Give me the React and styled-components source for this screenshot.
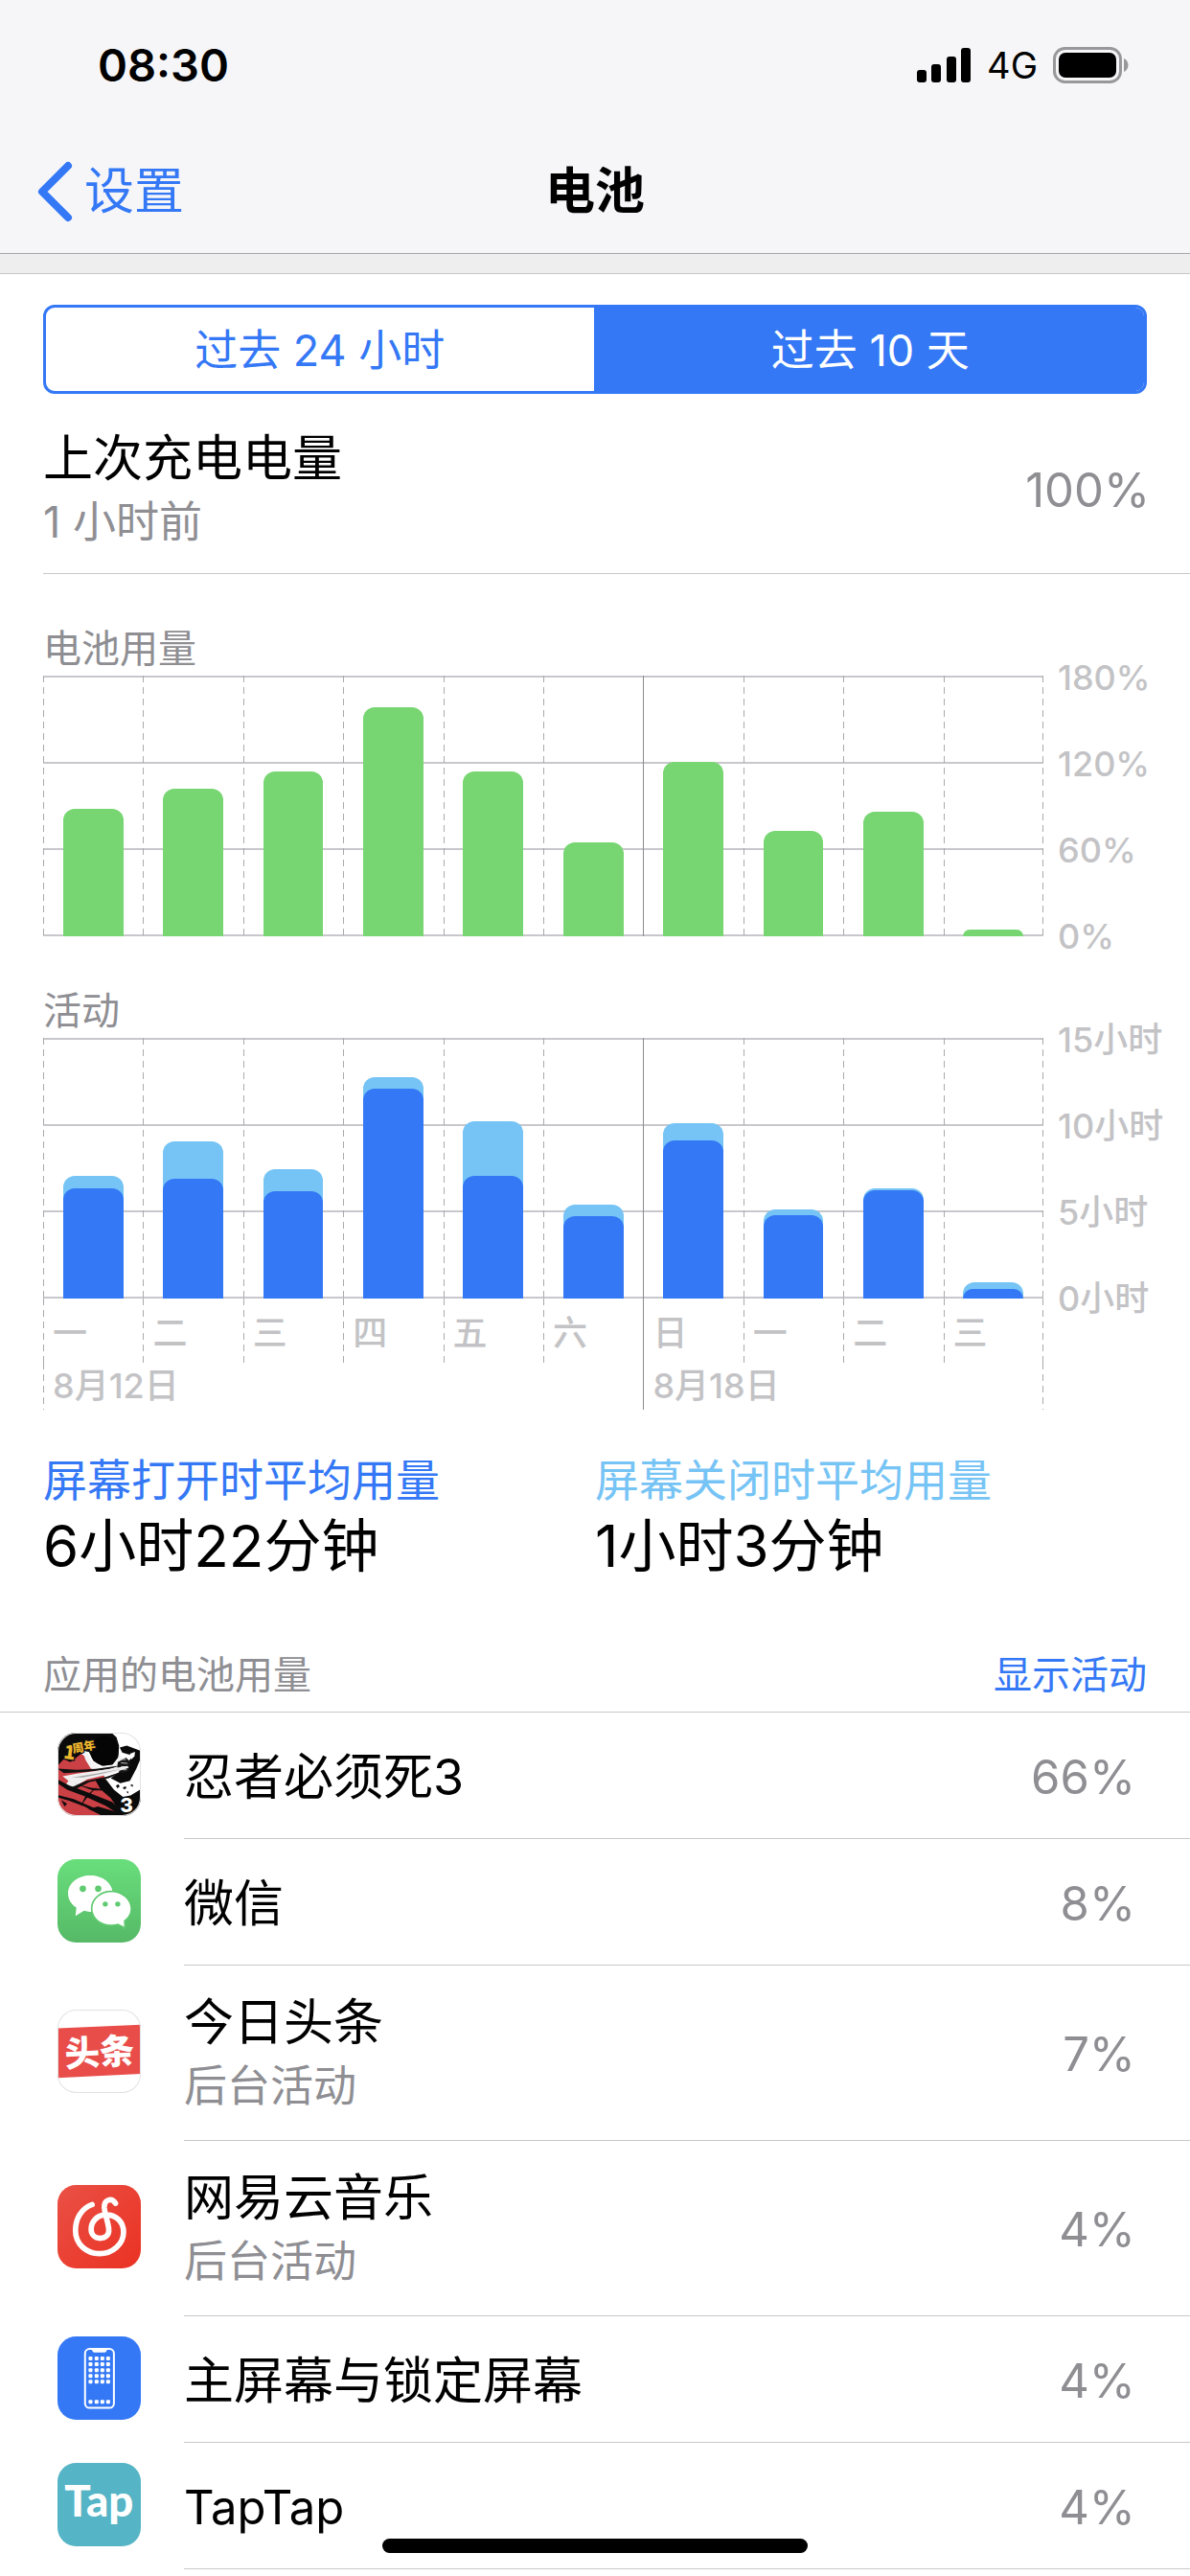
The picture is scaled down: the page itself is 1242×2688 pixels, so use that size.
import React from 'react'
import styled, { createGlobalStyle } from 'styled-components'

const BLUE = '#3478f6'
const LIGHTBLUE = '#76c4f5'
const GREEN = '#77d672'
const GRAY = '#8e8e93'
const AXISGRAY = '#c3c3c6'
const LINE = '#c8c7cc'

const GlobalStyle = createGlobalStyle`
  * { box-sizing: border-box; }
  body {
    margin: 0;
    background: #fff;
    color: #000;
    font-family: Inter, "Noto Sans CJK SC", sans-serif;
    font-size: 52px;
    line-height: 66px;
  }
  h1, h2, p, ul { margin: 0; padding: 0; font-size: inherit; font-weight: inherit; }
  button { font: inherit; border: 0; padding: 0; background: none; cursor: pointer; }
  svg { display: block; flex: none; }
`

const Header = styled.header`
  background: #f6f6f8;
  border-bottom: 1px solid #a7a7aa;
`

const StatusBar = styled.div`
  display: flex;
  align-items: center;
  justify-content: space-between;
  height: 132px;
  padding: 4px 64px 0 102px;
`

const Time = styled.span`
  font-size: 47px;
  font-weight: 600;
`

const StatusIcons = styled.div`
  display: flex;
  align-items: center;
  gap: 16px;
  font-size: 38px;
`

const NavBar = styled.nav`
  display: grid;
  grid-template-columns: 1fr auto 1fr;
  align-items: center;
  height: 132px;
  padding: 3px 38px 0;
`

const BackLink = styled.a`
  display: flex;
  align-items: center;
  gap: 11px;
  color: ${BLUE};
  text-decoration: none;
`

const Title = styled.h1`
  font-weight: 600;
`

const Spacer = styled.div`
  height: 21px;
  background: #eeeeef;
  border-bottom: 1px solid ${LINE};
`

const Segmented = styled.div`
  display: flex;
  height: 93px;
  margin: 32px 45px 0;
  border: 3px solid ${BLUE};
  border-radius: 12px;
  overflow: hidden;
`

const Segment = styled.button`
  flex: 1;
  padding-top: 3px;
  font-size: 45px;
  color: ${BLUE};

  &[aria-pressed='true'] {
    color: #fff;
    background: ${BLUE};
    border-left: 3px solid ${BLUE};
  }
`

const ChargeRow = styled.section`
  display: flex;
  align-items: center;
  justify-content: space-between;
  margin-left: 45px;
  padding: 35px 42px 20px 0;
  border-bottom: 1px solid ${LINE};
`

const SubText = styled.p`
  font-size: 45px;
  color: ${GRAY};
`

const Percent = styled.span`
  font-size: 49px;
  color: ${GRAY};
`

const ChartSection = styled.section`
  padding: 54px 0 0 45px;
`

const Caption = styled.h2`
  font-size: 40px;
  line-height: 48px;
  color: ${GRAY};
`

const ChartBody = styled.div`
  display: grid;
  grid-template-columns: 1fr 153px;
  margin-top: 4px;
`

const Plot = styled.div`
  display: grid;
  grid-template-columns: repeat(10, 1fr);
  height: 272px;
  background: repeating-linear-gradient(to bottom, ${LINE} 0 2px, transparent 2px 90px);
`

const dashes = 'repeating-linear-gradient(to bottom, #aaaaad 0 7px, transparent 7px 12px)'
const solid = 'linear-gradient(#8c8c8f, #8c8c8f)'

// every column draws the line on its left, the last one also closes the right side
const Column = styled.div`
  position: relative;
  background-image: ${p => (p.$week ? solid : dashes)}${p => (p.$last ? `, ${dashes}` : '')};
  background-size: 1px 100%;
  background-position: left top, right top;
  background-repeat: no-repeat;
`

const Bar = styled.div`
  position: absolute;
  left: 20%;
  right: 20%;
  bottom: 0;
  border-radius: 12px 12px 0 0;
  background: ${p => p.$color};
`

const Axis = styled.div`
  display: flex;
  flex-direction: column;
  justify-content: space-between;
  margin: -22px 0 -24px;
  padding-left: 15px;
  font-size: 36px;
  font-weight: 500;
  line-height: 48px;
  color: ${AXISGRAY};
`

const Days = styled.div`
  display: grid;
  grid-template-columns: repeat(10, 1fr);
  font-size: 36px;
  font-weight: 500;
  color: ${AXISGRAY};
`

const Day = styled(Column)`
  height: 67px;
  padding-left: 10px;
  line-height: 72px;
`

const Week = styled(Column)`
  grid-column: span ${p => p.$span};
  padding-left: 10px;
  line-height: 49px;
`

const Averages = styled.section`
  display: grid;
  grid-template-columns: 1fr 1fr;
  padding: 40px 45px 0;
`

const AverageLabel = styled.p`
  font-size: 46px;
  color: ${p => p.$color};
`

const AverageValue = styled.p`
  font-size: 60px;
  line-height: 72px;
`

const ListHeader = styled.div`
  display: flex;
  justify-content: space-between;
  align-items: center;
  padding: 75px 45px 14px;
  border-bottom: 1px solid ${LINE};
`

const ShowButton = styled.button`
  font-size: 40px;
  line-height: 48px;
  color: ${BLUE};
`

const AppList = styled.ul`
  list-style: none;
`

const AppRow = styled.li`
  display: flex;
  align-items: center;
  gap: 45px;
  padding-left: 60px;

  > svg {
    margin-bottom: 4px;
  }
`

const AppInfo = styled.div`
  display: flex;
  flex: 1;
  align-items: center;
  justify-content: space-between;
  min-height: 132px;
  padding: 27px 57px 23px 0;
  border-bottom: 1px solid ${LINE};
`

const AppName = styled.p`
  font-size: ${p => (p.$latin ? 49 : 52)}px;
`

const HomeIndicator = styled.div`
  position: fixed;
  left: 0;
  right: 0;
  bottom: 24px;
  width: 444px;
  height: 15px;
  margin: 0 auto;
  border-radius: 8px;
  background: #000;
`

const days = [
  { name: '一', battery: 88, on: 6.35, total: 7.05 },
  { name: '二', battery: 102, on: 6.9, total: 9.05 },
  { name: '三', battery: 114, on: 6.15, total: 7.45 },
  { name: '四', battery: 159, on: 12.1, total: 12.8 },
  { name: '五', battery: 114, on: 7.05, total: 10.25 },
  { name: '六', battery: 65, on: 4.7, total: 5.4 },
  { name: '日', battery: 121, on: 9.1, total: 10.1, week: true },
  { name: '一', battery: 73, on: 4.8, total: 5.1 },
  { name: '二', battery: 86, on: 6.2, total: 6.35 },
  { name: '三', battery: 4, on: 0.5, total: 0.9 },
]

function percentOf(value, max) {
  return { height: `${(value / max) * 270 + 1}px` }
}

function Signal() {
  return (
    <svg width="57" height="36" viewBox="0 0 57 36">
      <rect x="0" y="23" width="10" height="13" rx="3" />
      <rect x="15" y="17" width="10" height="19" rx="3" />
      <rect x="31" y="9" width="10" height="27" rx="3" />
      <rect x="46" y="0" width="10" height="36" rx="3" />
    </svg>
  )
}

function Battery() {
  return (
    <svg width="79" height="38" viewBox="0 0 79 38">
      <rect x="1.5" y="1.5" width="69" height="35" rx="11" fill="none" stroke="#98989a" strokeWidth="3" />
      <rect x="6" y="6" width="60" height="26" rx="7" />
      <path d="M74 12 C80 15 80 23 74 26 Z" fill="#98989a" />
    </svg>
  )
}

function Chevron() {
  return (
    <svg width="39" height="64" viewBox="0 0 39 64" fill="none" stroke={BLUE} strokeWidth="8" strokeLinecap="round" strokeLinejoin="round">
      <path d="M33 5 L6 32 L33 59" />
    </svg>
  )
}

function Tile({ id, children, outline }) {
  return (
    <svg width="87" height="87" viewBox="0 0 260 260">
      <clipPath id={id}>
        <rect width="260" height="260" rx="58" />
      </clipPath>
      <g clipPath={`url(#${id})`}>{children}</g>
      {outline && <rect x="1.5" y="1.5" width="257" height="257" rx="57" fill="none" stroke="#e2e2e4" strokeWidth="3" />}
    </svg>
  )
}

function NinjaIcon() {
  return (
    <Tile id="ninja" outline>
      <rect width="260" height="260" fill="#fff" />
      {/* red cloak */}
      <path d="M0 48 L70 62 L108 92 L140 122 L160 168 L196 210 L214 260 H0 Z" fill="#cb4045" />
      {/* ink behind the head */}
      <path d="M0 0 H168 L184 14 L192 40 L190 76 L172 100 L140 104 L112 88 L98 60 L84 58 L40 92 L20 82 L0 104 Z" fill="#0a0a0a" />
      <path d="M76 54 L92 60 L106 88 L132 108 L166 106 L188 84 L194 60 L200 84 L184 110 L136 120 L104 112 L88 86 Z" fill="#f4f4f4" />
      <ellipse cx="146" cy="56" rx="44" ry="46" fill="#050505" />
      {/* arm */}
      <path d="M194 46 L216 40 L258 56 L258 84 L246 112 L226 150 L196 158 L166 142 L196 120 L236 72 L214 66 L202 62 Z" fill="#0a0a0a" />
      <path d="M226 66 L242 60 L240 74 L230 84 Z" fill="#fff" />
      <path d="M188 92 L214 78 L228 92 L222 120 L200 128 L186 116 Z" fill="#151515" />
      <path d="M198 84 L214 84 M198 94 L218 96 M198 106 L220 106 M204 116 L216 116" stroke="#bbb" strokeWidth="3" />
      {/* blade */}
      <path d="M0 112 L60 116 L120 113 L196 102 L160 114 L96 122 L20 126 Z" fill="#111" />
      <path d="M16 136 L60 128 L130 118 L218 104 L222 110 L150 132 L92 146 L50 170 L22 168 L34 150 Z" fill="#f0eeee" />
      <path d="M44 140 L120 128 L206 112 L140 128 L80 140 Z" fill="#aaa" />
      <path d="M30 176 L90 150 L150 138 L218 116 L160 142 L100 154 L60 174 Z" fill="#111" />
      {/* torso and lower right corner */}
      <path d="M118 148 L150 144 L176 178 L204 200 L228 196 L260 176 V260 H160 L192 242 L166 204 L134 176 Z" fill="#0a0a0a" />
      <path d="M182 166 l8 -5 l4 7 l-7 5 Z M204 170 l9 -3 l2 6 l-8 4 Z M226 164 l8 -3 l2 8 Z M214 184 l8 0 l-2 6 Z" fill="#111" />
      {/* brush strokes over the cloak */}
      <path d="M0 146 L36 164 L100 188 L170 216 L212 250 L200 260 L150 228 L84 198 L30 178 L0 158 Z" fill="#0c0c0c" />
      <path d="M0 194 L50 207 L112 234 L156 260 H140 L84 230 L36 212 L0 202 Z" fill="#0c0c0c" />
      <path d="M56 160 L104 172 L178 180 L110 180 Z M126 166 L94 200 L72 230 L86 200 Z M12 210 L30 222 L22 230 Z M96 238 L126 230 L180 246 L196 260 H150 Z" fill="#0c0c0c" />
      <g fontWeight="800" fill="#f0b82d" stroke="#111" strokeWidth="8" paintOrder="stroke" fontFamily='"Noto Sans CJK SC", sans-serif'>
        <text x="20" y="82" fontSize="60" transform="rotate(8 34 60)">1</text>
        <text x="46" y="58" fontSize="36" transform="rotate(-10 78 44)">周年</text>
      </g>
      <text x="195" y="248" fontSize="62" fontWeight="800" fill="#fff" fontFamily="Inter, sans-serif">3</text>
    </Tile>
  )
}

function WechatIcon() {
  return (
    <Tile id="wechat">
      <linearGradient id="wechatBg" x1="0" y1="0" x2="0" y2="1">
        <stop offset="0" stopColor="#69de7c" />
        <stop offset="1" stopColor="#56b967" />
      </linearGradient>
      <rect width="260" height="260" fill="url(#wechatBg)" />
      <path d="M102 51 C64 51 33 75 33 107 C33 126 43 141 59 151 L56 177 L83 161 C89 163 96 164 102 164 C141 164 172 139 172 107 C172 75 141 51 102 51 Z" fill="#fff" />
      <path d="M168 103 C200 103 228 126 228 154 C228 169 220 183 207 191 L208 211 L189 201 C182 203 175 204 168 204 C135 204 109 182 109 154 C109 126 135 103 168 103 Z" fill="#fff" stroke="#60ca71" strokeWidth="10" paintOrder="stroke" />
      <g fill="#5fcb71">
        <circle cx="79" cy="92" r="10" />
        <circle cx="127" cy="92" r="10" />
        <circle cx="149" cy="140" r="8" />
        <circle cx="188" cy="140" r="8" />
      </g>
    </Tile>
  )
}

function ToutiaoIcon() {
  return (
    <Tile id="toutiao" outline>
      <rect width="260" height="260" fill="#fff" />
      <path d="M0 58 L260 47 V200 L0 213 Z" fill="#e84d4a" />
      <text x="22" y="172" transform="rotate(-3 130 130)" fontSize="109" fontWeight="900" fill="#fff" fontFamily='"Noto Sans CJK SC", sans-serif'>头条</text>
    </Tile>
  )
}

function NeteaseIcon() {
  return (
    <Tile id="netease">
      <linearGradient id="neteaseBg" x1="0" y1="0" x2="1" y2="1">
        <stop offset="0" stopColor="#ea5045" />
        <stop offset="1" stopColor="#ea3223" />
      </linearGradient>
      <rect width="260" height="260" fill="url(#neteaseBg)" />
      <path
        d="M108 61 C75 73 56 105 56 142 C56 184 90 214 131 214 C172 214 206 184 206 147 C206 112 180 92 150 93 C122 94 105 116 105 138 C105 154 116 166 133 166 C151 166 162 154 160 138 C158 116 148 92 146 70 C145 46 168 38 181 57"
        fill="none"
        stroke="#fff"
        strokeWidth="17"
        strokeLinecap="round"
      />
    </Tile>
  )
}

function HomeScreenIcon() {
  return (
    <Tile id="homescreen">
      <rect width="260" height="260" fill={BLUE} />
      <rect x="86" y="39" width="90" height="184" rx="14" fill="none" stroke="#fff" strokeWidth="6" />
      <path d="M104 38 H158 C154 40 153 50 147 50 H115 C109 50 108 40 104 38 Z" fill="#fff" />
      {[69, 87, 105, 123, 141, 204].map(y =>
        [103, 122, 140, 158].map(x => <rect key={`${x}-${y}`} x={x - 6} y={y - 6} width="12" height="12" rx="3" fill="#fff" />)
      )}
    </Tile>
  )
}

function TapIcon() {
  return (
    <Tile id="tap">
      <rect width="260" height="260" fill="#55b4c5" />
      <path d="M23 68 L36 72 V86 L26 84 Z" fill="#fff" />
      <text x="22" y="166" fontSize="136" fontWeight="900" fill="#fff" fontFamily="Lato, sans-serif">Tap</text>
    </Tile>
  )
}

const apps = [
  { name: '忍者必须死3', percent: '66%', icon: <NinjaIcon /> },
  { name: '微信', percent: '8%', icon: <WechatIcon /> },
  { name: '今日头条', note: '后台活动', percent: '7%', icon: <ToutiaoIcon /> },
  { name: '网易云音乐', note: '后台活动', percent: '4%', icon: <NeteaseIcon /> },
  { name: '主屏幕与锁定屏幕', percent: '4%', icon: <HomeScreenIcon /> },
  { name: 'TapTap', latin: true, percent: '4%', icon: <TapIcon /> },
]

function Chart({ title, labels, renderBars, children }) {
  return (
    <ChartSection>
      <Caption>{title}</Caption>
      <ChartBody>
        <Plot>
          {days.map((day, i) => (
            <Column key={i} $week={day.week} $last={i === days.length - 1}>
              {renderBars(day)}
            </Column>
          ))}
        </Plot>
        <Axis>
          {labels.map(label => <span key={label}>{label}</span>)}
        </Axis>
        {children}
      </ChartBody>
    </ChartSection>
  )
}

function App() {
  return (
    <>
      <GlobalStyle />
      <Header>
        <StatusBar>
          <Time>08:30</Time>
          <StatusIcons>
            <Signal />
            <span>4G</span>
            <Battery />
          </StatusIcons>
        </StatusBar>
        <NavBar>
          <BackLink href="#settings">
            <Chevron />
            设置
          </BackLink>
          <Title>电池</Title>
        </NavBar>
      </Header>
      <Spacer />

      <main>
        <Segmented>
          <Segment aria-pressed="false">过去 24 小时</Segment>
          <Segment aria-pressed="true">过去 10 天</Segment>
        </Segmented>

        <ChargeRow>
          <div>
            <p>上次充电电量</p>
            <SubText>1 小时前</SubText>
          </div>
          <Percent>100%</Percent>
        </ChargeRow>

        <Chart
          title="电池用量"
          labels={['180%', '120%', '60%', '0%']}
          renderBars={day => <Bar $color={GREEN} style={percentOf(day.battery, 180)} />}
        />

        <Chart
          title="活动"
          labels={['15小时', '10小时', '5小时', '0小时']}
          renderBars={day => (
            <>
              <Bar $color={LIGHTBLUE} style={percentOf(day.total, 15)} />
              <Bar $color={BLUE} style={percentOf(day.on, 15)} />
            </>
          )}
        >
          <Days>
            {days.map((day, i) => (
              <Day key={i} $week={day.week} $last={i === days.length - 1}>{day.name}</Day>
            ))}
            <Week $span={6}>8月12日</Week>
            <Week $span={4} $week $last>8月18日</Week>
          </Days>
        </Chart>

        <Averages>
          <div>
            <AverageLabel $color={BLUE}>屏幕打开时平均用量</AverageLabel>
            <AverageValue>6小时22分钟</AverageValue>
          </div>
          <div>
            <AverageLabel $color={LIGHTBLUE}>屏幕关闭时平均用量</AverageLabel>
            <AverageValue>1小时3分钟</AverageValue>
          </div>
        </Averages>

        <ListHeader>
          <Caption>应用的电池用量</Caption>
          <ShowButton>显示活动</ShowButton>
        </ListHeader>
        <AppList>
          {apps.map(app => (
            <AppRow key={app.name}>
              {app.icon}
              <AppInfo>
                <div>
                  <AppName $latin={app.latin}>{app.name}</AppName>
                  {app.note && <SubText>{app.note}</SubText>}
                </div>
                <Percent>{app.percent}</Percent>
              </AppInfo>
            </AppRow>
          ))}
        </AppList>
      </main>
      <HomeIndicator />
    </>
  )
}

export default App
